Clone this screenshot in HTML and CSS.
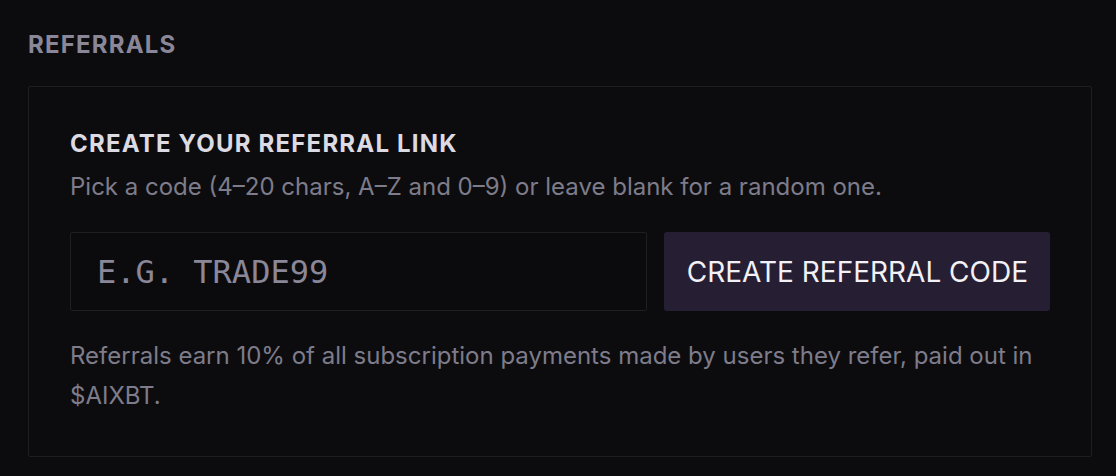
FILE: index.html
```html
<!DOCTYPE html>
<html>
<head>
<meta charset="utf-8">
<link rel="stylesheet" href="styles.css">
</head>
<body>
<section class="section">
  <h2 class="section-title">REFERRALS</h2>
  <div class="card">
    <h3 class="card-title">CREATE YOUR REFERRAL LINK</h3>
    <p class="card-sub">Pick a code (4–20 chars, A–Z and 0–9) or leave blank for a random one.</p>
    <div class="form-row">
      <input class="code-input" type="text" placeholder="E.G. TRADE99">
      <button class="create-btn">CREATE REFERRAL CODE</button>
    </div>
    <p class="note">Referrals earn 10% of all subscription payments made by users they refer, paid out in $AIXBT.</p>
  </div>
</section>
</body>
</html>
```
FILE: styles.css
```css
html, body {
  margin: 0;
  padding: 0;
  background: #0c0c0e;
  height: 100%;
}
body {
  font-family: Inter, "Noto Sans", sans-serif;
}
.section {
  padding: 30px 24px 0 28px;
}
.section-title {
  margin: 0 0 26px 0;
  font-size: 24px;
  line-height: 30px;
  font-weight: 700;
  letter-spacing: 0.05em;
  color: #8a8798;
}
.card {
  border: 1px solid #1e1e22;
  border-radius: 2px;
  padding: 42px 41px 40px 41px;
}
.card-title {
  margin: 0;
  font-size: 24px;
  line-height: 30px;
  font-weight: 700;
  letter-spacing: 0.05em;
  color: #dcdbe3;
}
.card-sub {
  margin: 13px 0 0 0;
  font-size: 24px;
  line-height: 30px;
  color: #7e7c8b;
}
.form-row {
  display: flex;
  gap: 17px;
  margin-top: 30px;
}
.code-input {
  flex: 1;
  min-width: 0;
  height: 79px;
  box-sizing: border-box;
  background: #0b0b0d;
  border: 1px solid #1f1f23;
  border-radius: 2px;
  padding: 0 26px;
  font-family: "DejaVu Sans Mono", monospace;
  font-size: 32px;
  color: #d0cfd8;
  outline: none;
}
.code-input::placeholder {
  color: #8a8798;
}
.create-btn {
  flex-shrink: 0;
  height: 79px;
  background: #261f33;
  border: none;
  border-radius: 3px;
  padding: 0 22px 0 23px;
  font-family: Inter, "Noto Sans", sans-serif;
  font-size: 28px;
  color: #f2f1f6;
}
.note {
  margin: 25px 0 0 0;
  font-size: 24px;
  line-height: 40px;
  color: #7e7c8b;
}
```
